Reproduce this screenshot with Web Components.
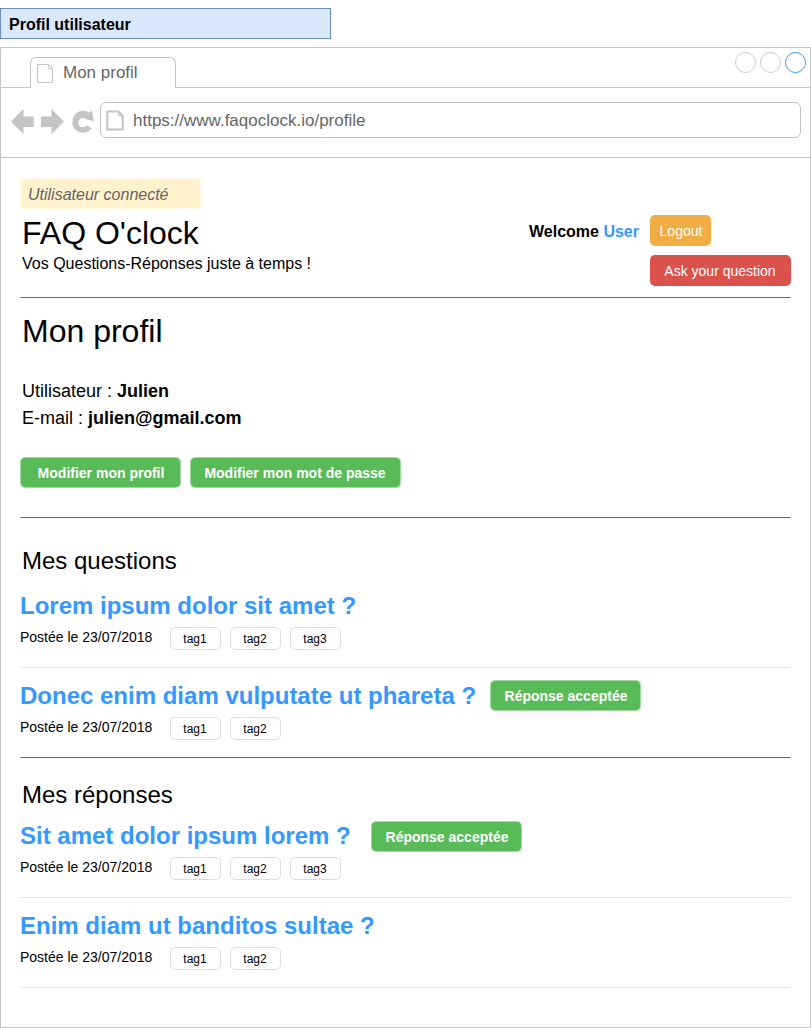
<!DOCTYPE html>
<html lang="fr">
<head>
<meta charset="utf-8">
<title>Profil utilisateur</title>
<style>
body { margin: 0; background: #fff; color: #000; font-family: "Liberation Sans", Arial, sans-serif; overflow: hidden; }
</style>
</head>
<body>
<profile-page></profile-page>
<script>
const define = (name, html) => {
  const t = document.createElement('template');
  t.innerHTML = html;
  customElements.define(name, class extends HTMLElement {
    constructor() {
      super();
      this.attachShadow({ mode: 'open' }).append(t.content.cloneNode(true));
    }
  });
};

define('page-label', `<style>
:host { display: block; box-sizing: border-box; width: 331px; height: 31px; padding-left: 8px; border: 1px solid #6c8ebf; background: #dae8fc; font: bold 16px/31px "Liberation Sans", sans-serif; }
</style><slot></slot>`);

define('rule-line', `<style>
:host { display: block; height: 1px; --c: #666; background: linear-gradient(90deg, #fff8 1px, transparent 1px calc(100% - 1px), #fff8 calc(100% - 1px)) var(--c); }
:host([light]) { --c: #e6e6e6; }
</style>`);

define('action-button', `<style>
:host { display: block; box-sizing: border-box; flex: none; height: 31px; border-radius: 5px; color: #fff; text-align: center; font-size: 14px; line-height: 32px; background: var(--bg); }
:host([green]) { border: 1px solid #58bb5890; background: #58bb58; background-clip: padding-box; line-height: 30px; font-weight: bold; padding-left: 1px; }
</style><slot></slot>`);

define('tag-chip', `<style>
:host { display: block; box-sizing: border-box; width: 51px; height: 23px; padding-right: 1px; border: 1px solid #ddd; border-radius: 5px; font-size: 12px; line-height: 22px; text-align: center; }
</style><slot></slot>`);

define('post-item', `<style>
:host { display: block; box-sizing: border-box; height: 89px; padding-top: 12px; }
.title { display: flex; height: 31px; color: #39f; font-weight: bold; font-size: 24px; line-height: 31px; white-space: nowrap; }
.meta { display: flex; height: 23px; margin-top: 6px; font-size: 14px; line-height: 20px; }
.date { width: 150px; }
.tags { display: flex; gap: 9px; }
</style>
<div class="title"><slot name="title"></slot><slot name="status"></slot></div>
<div class="meta"><span class="date"><slot name="date"></slot></span><div class="tags"><slot></slot></div></div>`);

define('browser-window', `<style>
:host { display: block; box-sizing: border-box; width: 811px; height: 981px; border: 1px solid #c4c4c4; }
.bar { display: flex; box-sizing: border-box; height: 40px; border-bottom: 1px solid #c4c4c4; color: #666; font-size: 17px; }
.tab { display: flex; box-sizing: border-box; width: 146px; height: 31px; margin: 9px 0 0 29px; border: 1px solid #c4c4c4; border-bottom: 0; border-radius: 6px 6px 0 0; background: #fff; line-height: 30px; }
.tab svg { margin: 6px 8px 0 6px; }
.dots { display: flex; gap: 4px; margin: 4px 4px 0 auto; }
.dots i { box-sizing: border-box; width: 21px; height: 21px; border: 1px solid #ccc; border-radius: 50%; }
.dots i:last-child { border-color: #39f; }
.tools { display: flex; box-sizing: border-box; height: 70px; border-bottom: 1px solid #c4c4c4; }
.nav { flex: none; width: 99px; height: 69px; }
.url { display: flex; box-sizing: border-box; width: 701px; height: 36px; margin-top: 14px; border: 1px solid #c4c4c4; border-radius: 6px; color: #666; font-size: 17px; line-height: 35px; }
.url svg { margin: 7px 8px 0 5px; }
svg { display: block; flex: none; }
</style>
<div class="bar">
  <div class="tab"><svg width="18" height="20" fill="none" stroke="#c4c4c4"><path d="M.5.5H11.5L15.5 4.5V18.5H.5Z"/><path stroke-width=".8" d="M11.5.5V4.5H15.5"/></svg><slot name="tab"></slot></div>
  <div class="dots"><i></i><i></i><i></i></div>
</div>
<div class="tools">
  <svg class="nav" viewBox="1 88 99 69" fill="#c4c4c4"><path d="M11 121.5 23.5 109V116.5H33.7V127H23.5V134ZM64 121.5 51.5 109V116.5H41V127H51.5V134Z"/><path d="M91.8 128.6A11 11 0 1 1 89.3 112.6L92 110.4 93.8 121.6 86 119A4.7 4.7 0 1 0 86.9 125.2Z"/></svg>
  <div class="url"><svg width="19" height="22" fill="none" stroke="#c4c4c4" stroke-width="2"><path d="M1.3 1.5H12.5L16.7 5.8V19.5H1.3Z"/><path stroke-width="1" d="M12.5 2V5.8H16"/></svg><slot name="url"></slot></div>
</div>
<slot></slot>`);

define('site-header', `<style>
:host { display: flex; justify-content: space-between; height: 119px; padding-top: 20px; }
.note { box-sizing: border-box; width: 181px; height: 31px; padding-left: 7px; border: 1px solid #fff2cc80; background: #fff2cc; background-clip: padding-box; font-style: italic; color: #666; line-height: 31px; }
.name { margin: 4px 0 0 2px; font-size: 32px; line-height: 40px; }
.sub { margin: 1px 0 0 2px; line-height: 20px; }
.user { display: flex; width: 262px; padding-top: 37px; font-weight: bold; line-height: 34px; }
.user span { width: 121px; white-space: nowrap; }
b { color: #39f; }
.actions { display: flex; flex-direction: column; gap: 9px; font-weight: normal; }
.logout { --bg: #f0ad43; width: 61px; padding-left: 1px; }
.ask { --bg: #db524d; width: 141px; padding-right: 1px; }
</style>
<div><div class="note">Utilisateur connecté</div><div class="name">FAQ O'clock</div><div class="sub">Vos Questions-Réponses juste à temps !</div></div>
<div class="user"><span>Welcome <b>User</b></span><div class="actions"><action-button class="logout">Logout</action-button><action-button class="ask">Ask your question</action-button></div></div>`);

define('profile-card', `<style>
:host { display: block; height: 219px; }
h1 { margin: 0; padding: 13px 0 0 2px; font-weight: normal; font-size: 32px; line-height: 40px; }
.info { padding: 27px 0 0 2px; font-size: 18px; line-height: 27px; }
.row { display: flex; gap: 9px; padding-top: 25px; }
</style>
<h1>Mon profil</h1>
<div class="info"><div>Utilisateur : <b>Julien</b></div><div>E-mail : <b>julien@gmail.com</b></div></div>
<div class="row"><action-button green style="width:161px">Modifier mon profil</action-button><action-button green style="width:211px;padding:0 1px 0 0">Modifier mon mot de passe</action-button></div>`);

define('section-title', `<style>
:host { display: block; box-sizing: border-box; padding-left: 2px; font-size: 24px; line-height: 30px; }
</style><slot></slot>`);

define('profile-page', `<style>
:host { display: block; box-sizing: border-box; height: 1028px; padding-top: 8px; font-size: 16px; }
browser-window { margin-top: 8px; }
main { padding: 0 19px; }
.q { height: 60px; padding-top: 28px; }
.r { height: 50px; padding-top: 22px; margin-bottom: 0; }
</style>
<page-label>Profil utilisateur</page-label>
<browser-window>
  <span slot="tab">Mon profil</span><span slot="url">https://www.faqoclock.io/profile</span>
  <main>
    <site-header></site-header>
    <rule-line></rule-line>
    <profile-card></profile-card>
    <rule-line></rule-line>
    <section-title class="q">Mes questions</section-title>
    <post-item><span slot="title">Lorem ipsum dolor sit amet ?</span><span slot="date">Postée le 23/07/2018</span><tag-chip>tag1</tag-chip><tag-chip>tag2</tag-chip><tag-chip>tag3</tag-chip></post-item>
    <rule-line light></rule-line>
    <post-item><span slot="title" style="width:470px">Donec enim diam vulputate ut phareta ?</span><action-button slot="status" green style="width:151px">Réponse acceptée</action-button><span slot="date">Postée le 23/07/2018</span><tag-chip>tag1</tag-chip><tag-chip>tag2</tag-chip></post-item>
    <rule-line></rule-line>
    <section-title class="r">Mes réponses</section-title>
    <post-item><span slot="title" style="width:351px">Sit amet dolor ipsum lorem ?</span><action-button slot="status" green style="width:151px;margin-top:1px">Réponse acceptée</action-button><span slot="date">Postée le 23/07/2018</span><tag-chip>tag1</tag-chip><tag-chip>tag2</tag-chip><tag-chip>tag3</tag-chip></post-item>
    <rule-line light></rule-line>
    <post-item><span slot="title">Enim diam ut banditos sultae ?</span><span slot="date">Postée le 23/07/2018</span><tag-chip>tag1</tag-chip><tag-chip>tag2</tag-chip></post-item>
    <rule-line light></rule-line>
  </main>
</browser-window>`);
</script>
</body>
</html>
